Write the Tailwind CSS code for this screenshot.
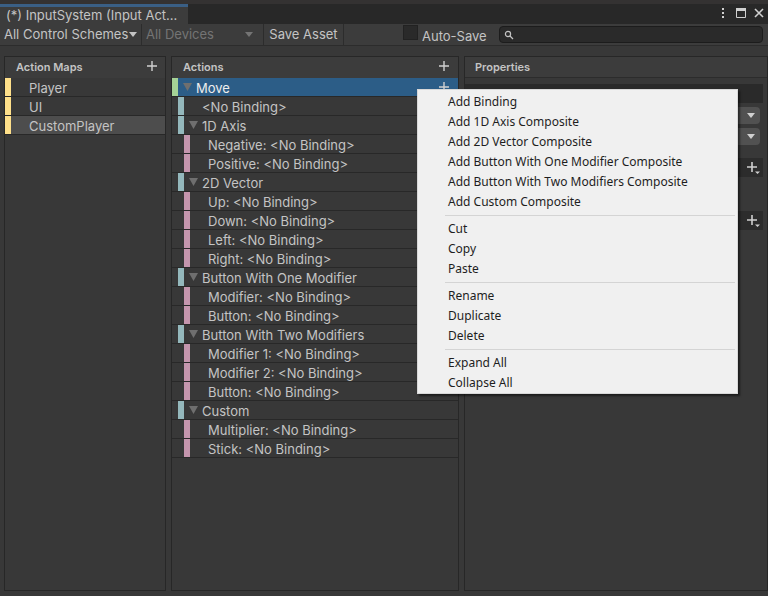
<!DOCTYPE html>
<html lang="en">
<head>
  <meta charset="UTF-8" />
  <meta name="viewport" content="width=device-width, initial-scale=1.0" />
  <title>InputSystem (Input Actions)</title>
  <script src="https://cdn.jsdelivr.net/npm/@tailwindcss/browser@4"></script>
</head>
<body class="bg-[#383838] text-[#c4c4c4] font-['Inter',sans-serif] text-[13px] min-h-screen flex flex-col overflow-hidden">

  <!-- Window title bar -->
  <header class="flex items-stretch h-6 bg-[#282828] border-t-4 border-[#343232]">
    <h1 class="w-[188px] bg-[#3c3c3c] border-t-3 border-[#3a5f85] pl-[6px] leading-4 whitespace-nowrap">(*) InputSystem (Input Act...</h1>
    <div class="ml-auto flex items-center gap-1.5 pr-[3px] pb-0.5">
      <button aria-label="Menu">
        <svg class="w-3 h-3" viewBox="0 0 12 12" fill="#d0d0d0"><path d="M5 1h2v2H5zM5 5h2v2H5zM5 9h2v2H5z" /></svg>
      </button>
      <button aria-label="Maximize">
        <svg class="w-3 h-3" viewBox="0 0 12 12"><path d="M1.500 1.500h9v9h-9z" fill="none" stroke="#d0d0d0" /><path d="M1 1h10v3H1z" fill="#d0d0d0" /></svg>
      </button>
      <button aria-label="Close">
        <svg class="w-3 h-3" viewBox="0 0 12 12" stroke="#d0d0d0" stroke-width="1.600"><path d="M2 2l8 8M10 2l-8 8" /></svg>
      </button>
    </div>
  </header>

  <!-- Toolbar -->
  <div class="flex items-stretch h-[22px] bg-[#3c3c3c] border-b border-[#2c2c2c]">
    <div class="relative w-[142px] border-r border-[#2c2c2c]">
      <select aria-label="Control scheme" class="appearance-none w-full h-full pl-1 outline-none">
        <option>All Control Schemes</option>
      </select>
      <svg class="absolute right-1 top-2 w-2 h-[5px] pointer-events-none" viewBox="0 0 8 5" fill="#c4c4c4"><path d="M0 0h8L4 5z" /></svg>
    </div>
    <div class="relative w-[122px] border-r border-[#2c2c2c] text-[#747474]">
      <select aria-label="Device" disabled class="appearance-none w-full h-full pl-1 outline-none">
        <option>All Devices</option>
      </select>
      <svg class="absolute right-[10px] top-2 w-2 h-[5px] pointer-events-none" viewBox="0 0 8 5" fill="#747474"><path d="M0 0h8L4 5z" /></svg>
    </div>
    <button class="w-20 border-r border-[#2c2c2c]">Save Asset</button>
    <label class="flex items-center gap-1 ml-[59px]">
      <input type="checkbox" class="appearance-none w-[15px] h-[15px] mb-1 bg-[#2a2a2a] border border-[#222]" />
      <span class="pt-1">Auto-Save</span>
    </label>
    <label class="flex-1 flex items-center ml-3 mr-[5px] my-0.5 px-1 rounded bg-[#2a2a2a] border border-[#1c1c1c]">
      <svg class="w-[10px] h-[10px]" viewBox="0 0 10 10" fill="none" stroke="#c4c4c4" stroke-width="1.200"><circle cx="4" cy="4" r="2.600" /><path d="M6 6l3 3" /></svg>
      <input type="text" aria-label="Search" class="flex-1 min-w-0 h-4 px-1 outline-none" />
    </label>
  </div>

  <main class="flex-1 flex gap-[5px] pt-[10px] pl-1 pb-[5px]">
    <section class="w-[162px] border border-[#272727]">
      <div class="flex items-center justify-between h-[21px] bg-[#3c3c3c] pl-[11px] pr-[7px]">
        <h2 class="text-[11px] font-semibold">Action Maps</h2>
        <button aria-label="Add action map" class="mb-1">
          <svg class="w-3 h-3" viewBox="0 0 12 12" stroke="#d0d0d0" stroke-width="1.400"><path d="M6 1v10M1 6h10" /></svg>
        </button>
      </div>
      <ul id="maps"></ul>
    </section>

    <section class="w-[288px] border border-[#272727]">
      <div class="flex items-center justify-between h-[21px] bg-[#3c3c3c] pl-[11px] pr-2">
        <h2 class="text-[11px] font-semibold">Actions</h2>
        <button aria-label="Add action" class="mb-1">
          <svg class="w-3 h-3" viewBox="0 0 12 12" stroke="#d0d0d0" stroke-width="1.400"><path d="M6 1v10M1 6h10" /></svg>
        </button>
      </div>
      <ul id="actions"></ul>
    </section>

    <section class="flex-1 border border-[#272727]">
      <div class="flex items-center h-[21px] bg-[#3c3c3c] pl-[10px] border-b border-[#2c2c2c]">
        <h2 class="text-[11px] font-semibold">Properties</h2>
      </div>
      <div class="flex flex-col pt-1.5 pr-1">
        <input type="text" aria-label="Filter" class="h-[19px] bg-[#2a2a2a]" />
        <div class="relative mt-1 ml-24 mr-[3px]">
          <select aria-label="Action type" class="block appearance-none w-full h-[17px] rounded-sm bg-[#515151]"></select>
          <svg class="absolute right-[5px] top-[6px] w-2 h-[5px] pointer-events-none" viewBox="0 0 8 5" fill="#d0d0d0"><path d="M0 0h8L4 5z" /></svg>
        </div>
        <div class="relative mt-1 ml-24 mr-[3px]">
          <select aria-label="Control type" class="block appearance-none w-full h-[17px] rounded-sm bg-[#515151]"></select>
          <svg class="absolute right-[5px] top-[6px] w-2 h-[5px] pointer-events-none" viewBox="0 0 8 5" fill="#d0d0d0"><path d="M0 0h8L4 5z" /></svg>
        </div>
        <div class="flex items-center justify-end h-[19px] mt-[13px] bg-[#2c2c2c] pr-[3px]">
          <button aria-label="Add interaction">
            <svg class="w-[14px] h-[14px]" viewBox="0 0 14 14"><path d="M6 1v10M1 6h10" stroke="#d0d0d0" stroke-width="1.600" /><path d="M9 10.500h5L11.500 13z" fill="#d0d0d0" /></svg>
          </button>
        </div>
        <div class="flex items-center justify-end h-[19px] mt-[34px] bg-[#2c2c2c] pr-[3px]">
          <button aria-label="Add processor">
            <svg class="w-[14px] h-[14px]" viewBox="0 0 14 14"><path d="M6 1v10M1 6h10" stroke="#d0d0d0" stroke-width="1.600" /><path d="M9 10.500h5L11.500 13z" fill="#d0d0d0" /></svg>
          </button>
        </div>
      </div>
    </section>
  </main>

  <!-- Context menu -->
  <div id="menu" role="menu" class="absolute left-[417px] top-[89px] w-[321px] flex flex-col bg-[#f0f0f0] border border-[#d8d8d8] pt-0.5 pr-0.5 text-[12px] text-[#1e1e1e] font-['Noto_Sans',sans-serif] shadow-[2px_2px_2px_rgba(0,0,0,0.5)]"></div>

  <script>
    const maps = ['Player', 'UI', 'CustomPlayer'];

    // level 0 = action, 1 = binding or composite, 2 = part of a composite
    const actions = [
      { level: 0, name: 'Move', open: true },
      { level: 1, name: '<No Binding>' },
      { level: 1, name: '1D Axis', open: true },
      { level: 2, name: 'Negative: <No Binding>' },
      { level: 2, name: 'Positive: <No Binding>' },
      { level: 1, name: '2D Vector', open: true },
      { level: 2, name: 'Up: <No Binding>' },
      { level: 2, name: 'Down: <No Binding>' },
      { level: 2, name: 'Left: <No Binding>' },
      { level: 2, name: 'Right: <No Binding>' },
      { level: 1, name: 'Button With One Modifier', open: true },
      { level: 2, name: 'Modifier: <No Binding>' },
      { level: 2, name: 'Button: <No Binding>' },
      { level: 1, name: 'Button With Two Modifiers', open: true },
      { level: 2, name: 'Modifier 1: <No Binding>' },
      { level: 2, name: 'Modifier 2: <No Binding>' },
      { level: 2, name: 'Button: <No Binding>' },
      { level: 1, name: 'Custom', open: true },
      { level: 2, name: 'Multiplier: <No Binding>' },
      { level: 2, name: 'Stick: <No Binding>' }
    ];

    const menu = [
      ['Add Binding', 'Add 1D Axis Composite', 'Add 2D Vector Composite', 'Add Button With One Modifier Composite', 'Add Button With Two Modifiers Composite', 'Add Custom Composite'],
      ['Cut', 'Copy', 'Paste'],
      ['Rename', 'Duplicate', 'Delete'],
      ['Expand All', 'Collapse All']
    ];

    const rowStyles = [
      'bg-[#2c5d87] text-[#eeeeee]',
      'pl-[6px]',
      'pl-[12px]'
    ];
    const barStyles = ['bg-[#a5d296]', 'bg-[#94b8bc]', 'bg-[#c495ad]'];

    const escapeHtml = text => text.replace(/</g, '&lt;').replace(/>/g, '&gt;');

    document.getElementById('maps').innerHTML = maps.map(name => `
      <li class="flex h-[19px] border-b border-[#282828] ${name === 'CustomPlayer' ? 'bg-[#4d4d4d]' : ''}">
        <span class="w-[6px] bg-[#ffe08a]"></span>
        <span class="pl-[18px] leading-5">${name}</span>
      </li>`).join('');

    document.getElementById('actions').innerHTML = actions.map(row => `
      <li class="flex h-[19px] border-b border-[#282828] ${rowStyles[row.level]}">
        <span class="w-[6px] ${barStyles[row.level]}"></span>
        <span class="flex w-[18px] pl-[5px] pt-[5px]">
          ${row.open ? '<button aria-label="Toggle" class="h-2"><svg class="w-[9px] h-2" viewBox="0 0 9 8" fill="#6f6f6f"><path d="M0 0h9L4.500 8z" /></svg></button>' : ''}
        </span>
        <span class="flex-1 leading-5 whitespace-nowrap">${escapeHtml(row.name)}</span>
        ${row.level === 0 ? '<button aria-label="Add binding" class="pr-2"><svg class="w-3 h-3" viewBox="0 0 12 12" stroke="#d0d0d0" stroke-width="1.400"><path d="M6 1v10M1 6h10" /></svg></button>' : ''}
      </li>`).join('');

    document.getElementById('menu').innerHTML = menu.map(group => group.map(item => `
      <button role="menuitem" class="h-5 pl-[30px] text-left leading-5">${item}</button>`).join('')
    ).join('<hr class="ml-[27px] my-[3px] border-[#d4d4d4]" />');
  </script>
</body>
</html>
